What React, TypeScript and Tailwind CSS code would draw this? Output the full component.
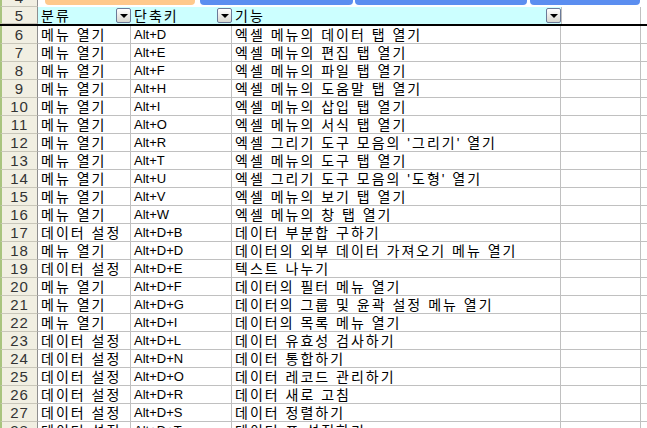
const rows: [number, string, string, string][] = [
  [6, '메뉴 열기', 'Alt+D', '엑셀 메뉴의 데이터 탭 열기'],
  [7, '메뉴 열기', 'Alt+E', '엑셀 메뉴의 편집 탭 열기'],
  [8, '메뉴 열기', 'Alt+F', '엑셀 메뉴의 파일 탭 열기'],
  [9, '메뉴 열기', 'Alt+H', '엑셀 메뉴의 도움말 탭 열기'],
  [10, '메뉴 열기', 'Alt+I', '엑셀 메뉴의 삽입 탭 열기'],
  [11, '메뉴 열기', 'Alt+O', '엑셀 메뉴의 서식 탭 열기'],
  [12, '메뉴 열기', 'Alt+R', "엑셀 그리기 도구 모음의 '그리기' 열기"],
  [13, '메뉴 열기', 'Alt+T', '엑셀 메뉴의 도구 탭 열기'],
  [14, '메뉴 열기', 'Alt+U', "엑셀 그리기 도구 모음의 '도형' 열기"],
  [15, '메뉴 열기', 'Alt+V', '엑셀 메뉴의 보기 탭 열기'],
  [16, '메뉴 열기', 'Alt+W', '엑셀 메뉴의 창 탭 열기'],
  [17, '데이터 설정', 'Alt+D+B', '데이터 부분합 구하기'],
  [18, '메뉴 열기', 'Alt+D+D', '데이터의 외부 데이터 가져오기 메뉴 열기'],
  [19, '데이터 설정', 'Alt+D+E', '텍스트 나누기'],
  [20, '메뉴 열기', 'Alt+D+F', '데이터의 필터 메뉴 열기'],
  [21, '메뉴 열기', 'Alt+D+G', '데이터의 그룹 및 윤곽 설정 메뉴 열기'],
  [22, '메뉴 열기', 'Alt+D+I', '데이터의 목록 메뉴 열기'],
  [23, '데이터 설정', 'Alt+D+L', '데이터 유효성 검사하기'],
  [24, '데이터 설정', 'Alt+D+N', '데이터 통합하기'],
  [25, '데이터 설정', 'Alt+D+O', '데이터 레코드 관리하기'],
  [26, '데이터 설정', 'Alt+D+R', '데이터 새로 고침'],
  [27, '데이터 설정', 'Alt+D+S', '데이터 정렬하기'],
  [28, '데이터 설정', 'Alt+D+T', '데이터 표 설정하기'],
];

function FilterButton() {
  return (
    <div className="w-[15px] h-[15px] shrink-0 rounded-[2px] border border-[#6b7a99] bg-gradient-to-b from-white to-[#d8d8d0] flex items-center justify-center">
      <div className="w-0 h-0 border-l-[4px] border-r-[4px] border-t-[4px] border-l-transparent border-r-transparent border-t-black" />
    </div>
  );
}

function RowHead({ n }: { n: number | string }) {
  return (
    <div className="w-[38px] shrink-0 flex items-center justify-center border-l-2 border-l-[#a9c47f] border-r border-r-[#8f8f8f] border-b border-b-[#c9c7ba] bg-[#f1efe2] text-[#333] text-[15px] tracking-[1px]">
      {n}
    </div>
  );
}

export default function App() {
  return (
    <div className="w-[647px] h-[428px] overflow-hidden bg-white font-['Liberation_Sans','Noto_Sans_CJK_KR',sans-serif] text-[14px] tracking-[2px] text-black leading-none">
      {/* row 4 - clipped at top */}
      <div className="h-[7px] overflow-hidden flex flex-col justify-end">
        <div className="h-[18px] shrink-0 flex">
          <RowHead n={4} />
          <div className="w-[7px] shrink-0" />
          <div className="w-[150px] shrink-0 h-[16px] rounded-b-[4px] bg-[#ffc98c]" />
          <div className="w-[5px] shrink-0" />
          <div className="w-[153px] shrink-0 h-[16px] rounded-b-[4px] bg-[#5b8ef0]" />
          <div className="w-[2px] shrink-0" />
          <div className="w-[172px] shrink-0 h-[16px] rounded-b-[4px] bg-[#5b8ef0]" />
          <div className="w-[3px] shrink-0" />
          <div className="w-[110px] shrink-0 h-[16px] rounded-b-[4px] bg-[#5b8ef0]" />
        </div>
      </div>

      {/* row 5 - header */}
      <div className="h-[19px] flex border-b-2 border-b-black">
        <RowHead n={5} />
        <div className="w-[93px] shrink-0 bg-[#ccffff] flex items-center justify-between pl-[3px]">
          <span>분류</span>
          <FilterButton />
        </div>
        <div className="w-[101px] shrink-0 bg-[#ccffff] flex items-center justify-between pl-[3px]">
          <span>단축키</span>
          <FilterButton />
        </div>
        <div className="w-[329px] shrink-0 bg-[#ccffff] flex items-center justify-between pl-[3px]">
          <span>기능</span>
          <FilterButton />
        </div>
        <div className="w-[80px] shrink-0 border-l border-l-[#c0c0c0] border-r border-r-[#c0c0c0]" />
        <div className="flex-1" />
      </div>

      {rows.map(([n, a, b, c]) => (
        <div key={n} className="h-[18px] flex">
          <RowHead n={n} />
          <div className="w-[93px] shrink-0 flex items-center pl-[3px] border-r border-b border-[#c0c0c0] whitespace-nowrap overflow-hidden">
            {a}
          </div>
          <div className="w-[101px] shrink-0 flex items-center pl-[3px] border-r border-b border-[#c0c0c0] whitespace-nowrap overflow-hidden text-[13px] tracking-normal">
            {b}
          </div>
          <div className="w-[329px] shrink-0 flex items-center pl-[3px] border-r border-b border-[#c0c0c0] whitespace-nowrap overflow-hidden">
            {c}
          </div>
          <div className="w-[80px] shrink-0 border-r border-b border-[#c0c0c0]" />
          <div className="flex-1 border-b border-[#c0c0c0]" />
        </div>
      ))}
    </div>
  );
}
